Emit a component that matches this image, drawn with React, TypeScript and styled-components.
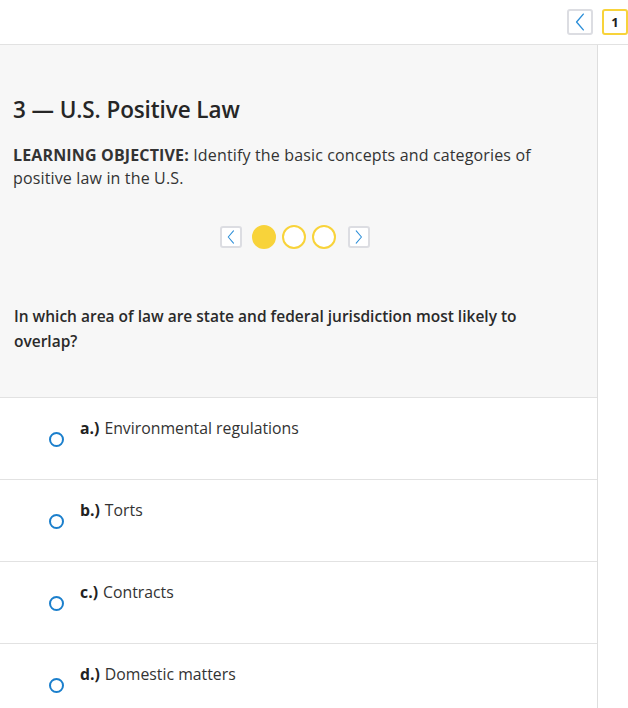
import React from 'react';
import styled, { createGlobalStyle } from 'styled-components';

const GlobalStyle = createGlobalStyle`
  body {
    margin: 0;
    font-family: "Open Sans", Lato, Arial, sans-serif;
    color: #262626;
    background: #fff;
  }
`;

const Page = styled.div`
  width: 628px;
  height: 708px;
  overflow: hidden;
  display: flex;
  flex-direction: column;
`;

const TopBar = styled.div`
  height: 44px;
  flex-shrink: 0;
  border-bottom: 1px solid #e2e2e2;
  display: flex;
  align-items: center;
  justify-content: flex-end;
  gap: 9px;
`;

const SquareButton = styled.button<{ $accent?: boolean }>`
  width: 26px;
  height: 26px;
  box-sizing: border-box;
  padding: 0;
  border-radius: 3px;
  border: 2px solid ${(p) => (p.$accent ? '#f8d33a' : '#dcdde2')};
  background: #fff;
  display: flex;
  align-items: center;
  justify-content: center;
  font-family: inherit;
  font-weight: 700;
  font-size: 13px;
  color: #1e1e1e;
`;

const Body = styled.div`
  flex: 1;
  display: flex;
`;

const Main = styled.div`
  width: 597px;
  border-right: 1px solid #dedede;
`;

const Intro = styled.section`
  background: #f7f7f7;
  border-bottom: 1px solid #e2e2e2;
  padding: 50px 13px 0;
  height: 353px;
  box-sizing: border-box;
`;

const Title = styled.h1`
  margin: 0;
  font-size: 22.5px;
  font-weight: 600;
  line-height: 30px;
  letter-spacing: -0.1px;
`;

const Objective = styled.p`
  margin: 19px 0 0;
  max-width: 545px;
  font-size: 16px;
  line-height: 23px;
  letter-spacing: 0.15px;
  color: #333;
  strong {
    font-weight: 700;
  }
`;

const Pager = styled.div`
  margin-top: 35px;
  padding-right: 8px;
  display: flex;
  align-items: center;
  justify-content: center;
  gap: 6px;
`;

const PagerButton = styled.button<{ $next?: boolean }>`
  width: 22px;
  height: 22px;
  box-sizing: border-box;
  padding: 0;
  border: 2px solid #dcdde2;
  border-radius: 3px;
  background: #fff;
  display: flex;
  align-items: center;
  justify-content: center;
  margin: ${(p) => (p.$next ? '0 0 0 6px' : '0 4px 0 0')};
`;

const Dot = styled.span<{ $active?: boolean }>`
  width: 24px;
  height: 24px;
  box-sizing: border-box;
  border-radius: 50%;
  border: 2px solid #f8d33a;
  background: ${(p) => (p.$active ? '#f8d33a' : '#fff')};
`;

const Question = styled.p`
  margin: 55px 1px 0;
  padding-right: 50px;
  font-size: 15.5px;
  font-weight: 600;
  line-height: 25px;
  color: #2a2a2a;
`;

const Option = styled.label`
  height: 82px;
  box-sizing: border-box;
  border-bottom: 1px solid #e2e2e2;
  display: flex;
  align-items: flex-start;
  padding: 20px 0 0 49px;
`;

const Radio = styled.span`
  width: 15px;
  height: 15px;
  box-sizing: border-box;
  border: 2px solid #1b7fcc;
  border-radius: 50%;
  margin-top: 14px;
  flex-shrink: 0;
`;

const OptionText = styled.span`
  margin-left: 16px;
  font-size: 15.8px;
  line-height: 20px;
  color: #333;
  b {
    font-weight: 700;
    color: #222;
    margin-right: 5px;
  }
`;

const Chevron = ({ dir, size }: { dir: 'left' | 'right'; size: number }) => (
  <svg width={size * 0.55} height={size} viewBox="0 0 8 16" fill="none">
    <path
      d={dir === 'left' ? 'M7 1 L1 8 L7 15' : 'M1 1 L7 8 L1 15'}
      stroke="#2b8ed8"
      strokeWidth="1.2"
      strokeLinecap="round"
      strokeLinejoin="round"
    />
  </svg>
);

const options = [
  { key: 'a', text: 'Environmental regulations' },
  { key: 'b', text: 'Torts' },
  { key: 'c', text: 'Contracts' },
  { key: 'd', text: 'Domestic matters' },
];

export default function App() {
  return (
    <>
      <GlobalStyle />
      <Page>
        <TopBar>
          <SquareButton aria-label="Previous">
            <Chevron dir="left" size={18} />
          </SquareButton>
          <SquareButton $accent>1</SquareButton>
        </TopBar>
        <Body>
          <Main>
            <Intro>
              <Title>3 — U.S. Positive Law</Title>
              <Objective>
                <strong>LEARNING OBJECTIVE:</strong> Identify the basic concepts and categories of
                positive law in the U.S.
              </Objective>
              <Pager>
                <PagerButton aria-label="Previous slide">
                  <Chevron dir="left" size={14} />
                </PagerButton>
                <Dot $active />
                <Dot />
                <Dot />
                <PagerButton $next aria-label="Next slide">
                  <Chevron dir="right" size={14} />
                </PagerButton>
              </Pager>
              <Question>
                In which area of law are state and federal jurisdiction most likely to overlap?
              </Question>
            </Intro>
            {options.map((o) => (
              <Option key={o.key}>
                <Radio />
                <OptionText>
                  <b>{o.key}.)</b>
                  {o.text}
                </OptionText>
              </Option>
            ))}
          </Main>
        </Body>
      </Page>
    </>
  );
}
